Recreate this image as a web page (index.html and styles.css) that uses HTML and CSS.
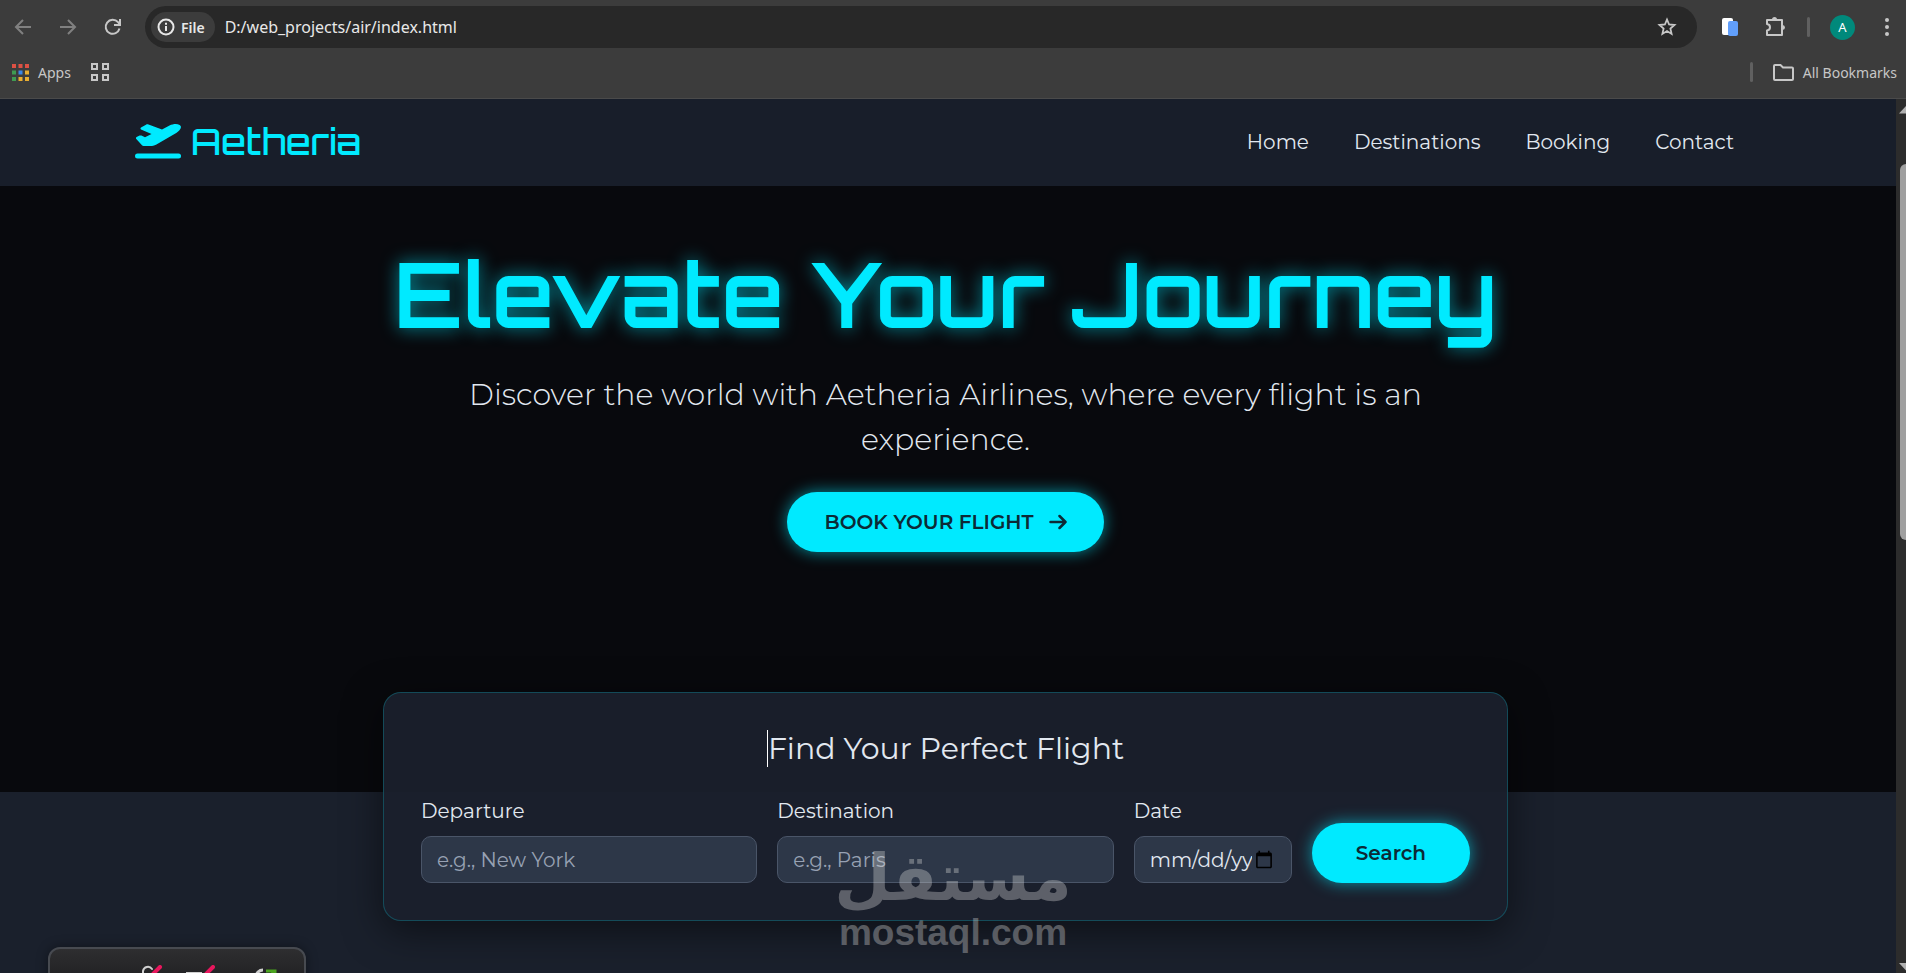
FILE: index.html
```
<!DOCTYPE html>
<html lang="en">
<head>
    <meta charset="UTF-8">
    <meta name="viewport" content="width=device-width, initial-scale=1">
    <title>Aetheria Airlines</title>
    <link rel="stylesheet" href="styles.css">
</head>
<body>

<!-- Browser bars -->
<div class="browser">
    <div class="toolbar">
        <button class="tool dim" aria-label="Back">
            <svg width="18" height="18" viewBox="0 0 18 18" fill="none" stroke="currentColor" stroke-width="2"><path d="M17 9H2M9 2 2 9l7 7"/></svg>
        </button>
        <button class="tool dim" aria-label="Forward">
            <svg width="18" height="18" viewBox="0 0 18 18" fill="none" stroke="currentColor" stroke-width="2"><path d="M1 9h15M9 2l7 7-7 7"/></svg>
        </button>
        <button class="tool" aria-label="Reload">
            <svg width="18" height="18" viewBox="0 0 18 18" fill="none" stroke="currentColor" stroke-width="2"><path d="M15.5 10.5A7 7 0 1 1 14 4.200L16 6.500M16 1v6h-6"/></svg>
        </button>
        <div class="omnibox">
            <button class="chip">
                <svg width="18" height="18" viewBox="0 0 18 18" fill="none" stroke="currentColor" stroke-width="2"><circle cx="9" cy="9" r="7.500"/><path d="M9 8v5M9 4.800v2"/></svg>
                File
            </button>
            <input class="url" type="text" aria-label="Address" value="D:/web_projects/air/index.html">
            <button class="star" aria-label="Bookmark this page">
                <svg width="20" height="20" viewBox="0 0 20 20" fill="none" stroke="currentColor" stroke-width="1.800"><path d="m10 2.500 2.100 5 5.400.5-4.100 3.600 1.200 5.300L10 14.100l-4.600 2.800 1.200-5.300L2.500 8l5.400-.5z"/></svg>
            </button>
        </div>
        <div class="tools-right">
            <button class="tool extension" aria-label="Extension">
                <svg width="18" height="20" viewBox="0 0 18 20"><rect x="1" y="1" width="11" height="17" rx="2" fill="#fff"/><rect x="7" y="4" width="10" height="15" rx="2" fill="#619ffb"/></svg>
            </button>
            <button class="tool" aria-label="Extensions">
                <svg width="22" height="22" viewBox="0 0 22 22" fill="none" stroke="currentColor" stroke-width="2"><path d="M2 4h15v15H2v-4.500c4-.5 4-6 0-6.500z" stroke-linejoin="round"/><path d="M7 3.500a2.500 2.500 0 0 1 5 0zM17.500 9a2.500 2.500 0 0 1 0 5z" fill="currentColor" stroke="none"/></svg>
            </button>
            <span class="divider"></span>
            <button class="avatar" aria-label="Profile">A</button>
            <button class="tool menu" aria-label="Menu">
                <svg width="6" height="18" viewBox="0 0 6 18" fill="currentColor"><circle cx="3" cy="2" r="2"/><circle cx="3" cy="9" r="2"/><circle cx="3" cy="16" r="2"/></svg>
            </button>
        </div>
    </div>
    <div class="bookmarks">
        <button class="bookmark">
            <svg width="17" height="17" viewBox="0 0 17 17"><path fill="#dd5144" d="M0 0h4v4H0zM6.500 0h4v4h-4zM13 0h4v4h-4z"/><path fill="#3f9b52" d="M0 6.500h4v4H0zM0 13h4v4H0z"/><path fill="#3a86e8" d="M6.500 6.500h4v4h-4z"/><path fill="#e9ad31" d="M13 6.500h4v4h-4zM6.500 13h4v4h-4zM13 13h4v4h-4z"/></svg>
            Apps
        </button>
        <button class="bookmark" aria-label="Tab groups">
            <svg width="18" height="18" viewBox="0 0 18 18" fill="none" stroke="currentColor" stroke-width="2"><path d="M1 1h5v5H1zM12 1h5v5h-5zM1 12h5v5H1zM12 12h5v5h-5z"/></svg>
        </button>
        <span class="divider push"></span>
        <button class="bookmark">
            <svg width="21" height="17" viewBox="0 0 21 17" fill="none" stroke="currentColor" stroke-width="2"><path d="M2 1h5.500l2.500 2.500h9a1 1 0 0 1 1 1V15a1 1 0 0 1-1 1H2a1 1 0 0 1-1-1V2a1 1 0 0 1 1-1z"/></svg>
            All Bookmarks
        </button>
    </div>
</div>

<div class="window">
    <div class="page">
        <header class="header">
            <a class="logo" href="#">
                <svg width="46" height="35" viewBox="0 0 46 35" fill="currentColor"><path d="M6 3.500 11 .7c.8-.5 1.700-.5 2.500-.1L27 5.600l7.500-4C38-.1 42-.4 44.600.9c1.700.9 1.600 2.600.7 4.100-1.200 2.200-3.400 3.800-5.800 5L21 20.800c-1.300.7-2.600 1.100-4 1.100H9.500c-1.300 0-2.400-.5-3.200-1.500L1.300 15c-.6-.7-.4-1.500.3-1.900l3-1.500c.6-.3 1.200-.3 1.800 0l3.600 1.700 6.500-3.300L6 5.400c-.7-.5-.7-1.400 0-1.900z"/><rect y="29.500" width="46" height="5" rx="2.500"/></svg>
                <span>Aetheria</span>
            </a>
            <nav class="nav">
                <a href="#">Home</a>
                <a href="#">Destinations</a>
                <a href="#">Booking</a>
                <a href="#">Contact</a>
            </nav>
        </header>

        <section class="hero">
            <h1>Elevate Your Journey</h1>
            <p>Discover the world with Aetheria Airlines, where every flight is an experience.</p>
            <a class="btn btn-hero" href="#search">
                BOOK YOUR FLIGHT
                <svg width="18" height="16" viewBox="0 0 18 16" fill="none" stroke="currentColor" stroke-width="2.500" stroke-linecap="round" stroke-linejoin="round"><path d="M1.500 8h15M10.500 2l6 6-6 6"/></svg>
            </a>
        </section>

        <section class="booking" id="search">
            <form class="card">
                <h2><span class="caret"></span>Find Your Perfect Flight</h2>
                <div class="fields">
                    <div class="field wide">
                        <label for="departure">Departure</label>
                        <input type="text" id="departure" placeholder="e.g., New York">
                    </div>
                    <div class="field wide">
                        <label for="destination">Destination</label>
                        <input type="text" id="destination" placeholder="e.g., Paris">
                    </div>
                    <div class="field">
                        <label for="date">Date</label>
                        <input type="date" id="date">
                    </div>
                    <button class="btn" type="button">Search</button>
                </div>
            </form>
        </section>
    </div>

    <div class="scrollbar">
        <svg width="10" height="8" viewBox="0 0 10 8" fill="#b0b0b0"><path d="M3 7.500 10 0v7.500z"/></svg>
        <div class="track"><div class="thumb"></div></div>
        <svg width="10" height="8" viewBox="0 0 10 8" fill="#b0b0b0"><path d="M3 0h7v7.500z"/></svg>
    </div>
</div>

<div class="watermark">
    <span class="mark-ar" lang="ar" dir="rtl">مستقل</span>
    <span class="mark-en">mostaql.com</span>
</div>

<!-- Call controls peeking in from the bottom edge -->
<div class="dock">
    <svg width="22" height="20" viewBox="0 0 22 20" fill="none" stroke-linecap="round"><path d="M2 14V6a5 5 0 0 1 9-2" stroke="#d0d0d0" stroke-width="2"/><path d="M5 16 19 2" stroke="#e8175d" stroke-width="4"/></svg>
    <svg width="30" height="20" viewBox="0 0 30 20" fill="none" stroke-linecap="round"><path d="M2 8h14v11H2z" stroke="#d0d0d0" stroke-width="2"/><path d="M14 16 28 2" stroke="#e8175d" stroke-width="4"/></svg>
    <svg class="share" width="24" height="20" viewBox="0 0 24 20" fill="none"><path d="M2 19V12a7 7 0 0 1 7-7" stroke="#d0d0d0" stroke-width="3"/><path d="M12 6h9v10M21 6 10 17" stroke="#4ba41f" stroke-width="3"/></svg>
</div>

</body>
</html>
```
FILE: styles.css
```
* {
    box-sizing: border-box;
}
body {
    margin: 0;
    height: 100vh;
    display: flex;
    flex-direction: column;
    position: relative;
    overflow: hidden;
    background: #1a202c;
    color: #e2e8f0;
    font-family: Montserrat, Inter, sans-serif;
    font-size: 20px;
}
button {
    border: none;
    background: none;
    padding: 0;
    color: inherit;
    font: inherit;
    cursor: pointer;
}
a {
    color: inherit;
    text-decoration: none;
}
svg {
    display: block;
    flex: none;
}

/* browser bars */
.browser {
    background: #3c3c3c;
    border-bottom: 1px solid #4a4a4a;
    color: #c7c7c7;
    font-family: "Segoe UI", "Noto Sans", sans-serif;
    font-size: 14px;
}
.toolbar {
    display: flex;
    align-items: center;
    gap: 27px;
    padding: 6px 16px 0 14px;
}
.tool {
    display: flex;
}
.dim {
    color: #808080;
}
.omnibox {
    flex: 1;
    display: flex;
    align-items: center;
    height: 42px;
    margin-left: -4px;
    padding: 0 20px 0 6px;
    border-radius: 21px;
    background: #282828;
}
.chip {
    display: flex;
    align-items: center;
    gap: 6px;
    height: 30px;
    padding: 0 10px 0 6px;
    border-radius: 15px;
    background: #3c3c3c;
    color: #e8e8e8;
    font-weight: 600;
}
.url {
    flex: 1;
    border: none;
    outline: none;
    background: none;
    padding: 0 10px;
    color: #e8e8e8;
    font: inherit;
    font-size: 16px;
}
.tools-right {
    display: flex;
    align-items: center;
    gap: 20px;
    margin-left: -3px;
}
.extension {
    margin-right: 6px;
}
.menu {
    margin-left: 9px;
}
.divider {
    width: 3px;
    height: 20px;
    border-radius: 2px;
    background: #606060;
}
.avatar {
    width: 25px;
    height: 25px;
    border-radius: 50%;
    background: #00897b;
    color: #fff;
    font-size: 13px;
}
.bookmarks {
    display: flex;
    align-items: center;
    gap: 20px;
    height: 50px;
    padding: 0 9px 2px 12px;
}
.bookmark {
    display: flex;
    align-items: center;
    gap: 9px;
}
.push {
    margin-left: auto;
}

/* page */
.window {
    flex: 1;
    display: flex;
    min-height: 0;
}
.page {
    flex: 1;
    overflow: hidden;
}
.header {
    display: flex;
    align-items: center;
    justify-content: space-between;
    height: 87px;
    padding: 0 162px 2px 135px;
    background: #181e2a;
}
.logo {
    display: flex;
    align-items: center;
    gap: 10px;
    color: #00eaff;
    font-family: Orbitron, "DejaVu Sans", sans-serif;
    font-size: 36px;
    font-weight: 500;
    line-height: 40px;
}
.nav {
    display: flex;
    gap: 45px;
}
.hero {
    display: flex;
    flex-direction: column;
    align-items: center;
    height: 606px;
    padding: 54px 5px 0 0;
    background: #08090d;
    text-align: center;
}
.hero h1 {
    margin: 0;
    color: #00eaff;
    font-family: Orbitron, "DejaVu Sans", sans-serif;
    font-size: 90px;
    font-weight: 600;
    line-height: 108px;
    text-shadow: 0 0 18px rgba(0, 234, 255, 0.6);
}
.hero p {
    max-width: 1000px;
    margin: 24px 0 30px;
    font-size: 30px;
    font-weight: 300;
    line-height: 45px;
}
.btn {
    display: flex;
    align-items: center;
    justify-content: center;
    height: 60px;
    border-radius: 30px;
    background: #00eaff;
    box-shadow: 0 0 16px rgba(0, 234, 255, 0.6);
    color: #0c2a36;
    font-weight: 600;
}
.btn-hero {
    gap: 15px;
    padding: 0 37px;
}
.booking {
    padding-right: 5px;
}
.card {
    position: relative;
    max-width: 1125px;
    margin: -100px auto 0;
    padding: 33px 37px 37px;
    border: 1px solid rgba(0, 234, 255, 0.22);
    border-radius: 18px;
    background: rgba(26, 32, 44, 0.95);
    box-shadow: 0 10px 38px rgba(0, 0, 0, 0.5);
}
.card h2 {
    display: flex;
    justify-content: center;
    align-items: center;
    margin: 0 0 25px;
    font-size: 30px;
    font-weight: 400;
    line-height: 45px;
}
.caret {
    width: 1px;
    height: 37px;
    background: #fff;
}
.fields {
    display: grid;
    grid-template-columns: repeat(6, minmax(0, 1fr));
    gap: 20px;
    align-items: end;
}
.wide {
    grid-column: span 2;
}
.field label {
    display: block;
    margin-bottom: 10px;
    line-height: 30px;
}
.field input {
    display: block;
    width: 100%;
    height: 47px;
    padding: 0 15px;
    border: 1px solid #4a5568;
    border-radius: 10px;
    background: #2d3748;
    color: #e2e8f0;
    font: inherit;
}
.field input::placeholder {
    color: #97a1b3;
}
.field input::-webkit-datetime-edit-month-field,
.field input::-webkit-datetime-edit-day-field,
.field input::-webkit-datetime-edit-year-field {
    padding: 0;
}

/* scrollbar */
.scrollbar {
    display: flex;
    flex-direction: column;
    justify-content: space-between;
    width: 10px;
    padding: 7px 0 2px;
    background: #2c2c2c;
}
.track {
    flex: 1;
    padding: 50px 0 0 4px;
}
.thumb {
    height: 47%;
    border-radius: 6px 0 0 6px;
    background: #9f9f9f;
}

/* overlays */
.watermark {
    position: absolute;
    left: 50%;
    bottom: 20px;
    display: flex;
    flex-direction: column;
    align-items: center;
    transform: translateX(-50%);
    opacity: 0.36;
    color: #d4d4d4;
    font-weight: 700;
    pointer-events: none;
}
.mark-ar {
    font-family: "DejaVu Sans", sans-serif;
    font-size: 65px;
    line-height: 70px;
}
.mark-en {
    font-family: "Liberation Sans", Arial, sans-serif;
    font-size: 37px;
    line-height: 40px;
}
.dock {
    position: absolute;
    left: 48px;
    bottom: -20px;
    display: flex;
    gap: 22px;
    width: 258px;
    height: 46px;
    padding: 16px 0 0 91px;
    border: 2px solid #474a50;
    border-radius: 12px;
    background: linear-gradient(#2e2e30, #1c1c1e);
    box-shadow: 0 0 12px rgba(0, 0, 0, 0.4);
}
.share {
    margin-left: 17px;
}
```
